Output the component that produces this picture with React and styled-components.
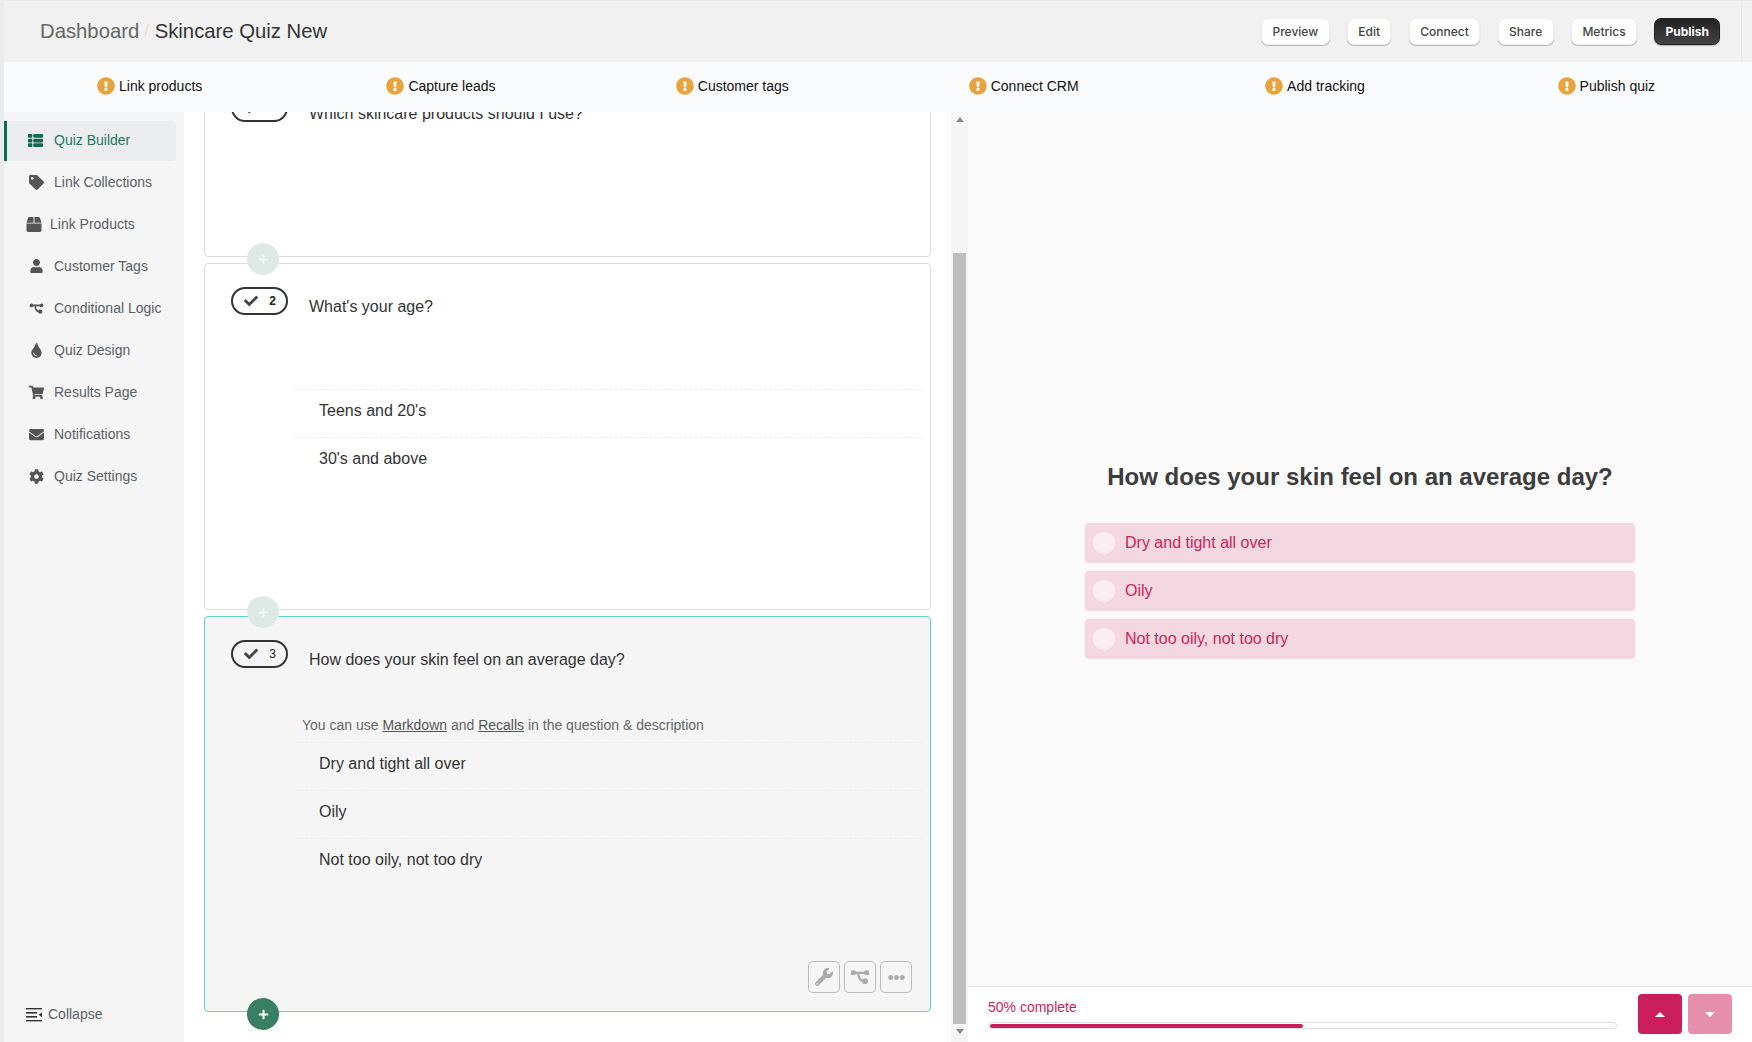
import React from "react";
import styled, { createGlobalStyle } from "styled-components";
import {
  FaCheck,
  FaCog,
  FaEllipsisH,
  FaEnvelope,
  FaExclamationCircle,
  FaPlus,
  FaShoppingCart,
  FaTag,
  FaThList,
  FaTint,
  FaUser,
  FaBox,
  FaWrench,
} from "react-icons/fa";

const GlobalStyle = createGlobalStyle`
  * { box-sizing: border-box; }
  html, body { margin: 0; height: 100%; overflow: hidden; }
  body {
    font-family: "Liberation Sans", Arial, sans-serif;
    color: #333;
  }
`;

const LogicIcon = ({ size = 16 }) => (
  <svg width={size} height={size} viewBox="0 0 24 24" fill="none" stroke="currentColor" strokeWidth="2.6">
    <path d="M4 7h16M10 7c0 7 2 10 7 10" />
    <circle cx="4" cy="7" r="3" fill="currentColor" stroke="none" />
    <circle cx="20" cy="7" r="3" fill="currentColor" stroke="none" />
    <circle cx="18" cy="17" r="3.4" fill="currentColor" stroke="none" />
  </svg>
);

const CollapseIcon = () => (
  <svg width="16" height="15" viewBox="0 0 16 15" fill="#333">
    <rect x="0" y="1" width="16" height="1.4" />
    <rect x="0" y="5" width="11" height="1.6" />
    <rect x="0" y="9" width="11" height="1.6" />
    <rect x="0" y="13" width="16" height="1.4" />
    <path d="M12.5 7.8L16 5.4v4.8z" />
  </svg>
);

const NAV = [
  { label: "Quiz Builder", icon: <FaThList size={15} />, active: true },
  { label: "Link Collections", icon: <FaTag size={15} /> },
  { label: "Link Products", icon: <FaBox size={15} />, tight: true },
  { label: "Customer Tags", icon: <FaUser size={14} /> },
  { label: "Conditional Logic", icon: <LogicIcon size={15} /> },
  { label: "Quiz Design", icon: <FaTint size={15} /> },
  { label: "Results Page", icon: <FaShoppingCart size={15} /> },
  { label: "Notifications", icon: <FaEnvelope size={15} /> },
  { label: "Quiz Settings", icon: <FaCog size={15} /> },
];

const STEPS = ["Link products", "Capture leads", "Customer tags", "Connect CRM", "Add tracking", "Publish quiz"];
const ACTIONS = ["Preview", "Edit", "Connect", "Share", "Metrics"];
const SKIN_OPTIONS = ["Dry and tight all over", "Oily", "Not too oily, not too dry"];

const Page = styled.div`
  display: flex;
  flex-direction: column;
  height: 100vh;
  padding-left: 4px;
  background: #ebebeb;
`;

const Header = styled.header`
  position: relative;
  display: flex;
  flex: 0 0 62px;
  align-items: center;
  justify-content: space-between;
  padding: 0 32px 1px 36px;
  background: #f1f1f1;
  border-top: 1px solid #e9e9e9;

  &::after {
    content: "";
    position: absolute;
    top: 0;
    right: 10px;
    bottom: 0;
    width: 1px;
    background: #e7e7e7;
  }
`;

const Crumbs = styled.div`
  display: flex;
  align-items: center;
  font-size: 20.3px;
  color: #666;
`;

const Slash = styled.span`
  margin: 0 6px 0 5px;
  color: #ddd;
  font-size: 16px;
`;

const Current = styled.span`
  color: #333;
`;

const Actions = styled.div`
  display: flex;
  gap: 17.4px;
`;

const ActionButton = styled.button`
  height: 27px;
  padding: 0 ${(p) => (p.$dark ? "10px" : "10.4px")};
  border: 1px solid ${(p) => (p.$dark ? "#222" : "#eee")};
  border-radius: 7px;
  background: ${(p) => (p.$dark ? "linear-gradient(#222, #444)" : "#fff")};
  box-shadow: 0 1px 1px rgba(0, 0, 0, 0.25);
  color: ${(p) => (p.$dark ? "#fff" : "#444")};
  font-family: Inter, sans-serif;
  font-size: 12px;
  font-weight: ${(p) => (p.$dark ? 700 : 500)};
`;

const Banner = styled.nav`
  display: grid;
  flex: 0 0 50px;
  grid-template-columns: repeat(6, 1fr);
  padding-bottom: 3px;
  background: #fafbfd;
`;

const Step = styled.div`
  display: flex;
  align-items: center;
  justify-content: center;
  gap: 4px;
  font-size: 14px;
  color: #111;

  svg {
    color: #e8a33d;
  }
`;

const Body = styled.div`
  display: flex;
  flex: 1;
  min-height: 0;
`;

const Sidebar = styled.aside`
  display: flex;
  flex: 0 0 180px;
  flex-direction: column;
  padding: 9px 8px 20px 0;
  background: #f5f5f5;
`;

const NavItem = styled.a`
  display: flex;
  align-items: center;
  gap: ${(p) => (p.$tight ? "8px" : "10px")};
  height: 40px;
  margin-bottom: 2px;
  padding: 0 0 2px ${(p) => (p.$tight ? "19px" : "22px")};
  border-left: 3px solid ${(p) => (p.$active ? "#0e6b4d" : "transparent")};
  border-radius: 0 4px 4px 0;
  background: ${(p) => (p.$active ? "#ebecee" : "transparent")};
  color: ${(p) => (p.$active ? "#1f7a5c" : "#5a5f66")};
  font-size: 14px;

  svg {
    flex: 0 0 auto;
    width: ${(p) => (p.$tight ? "16px" : "15px")};
    margin-left: ${(p) => (p.$active ? "-1px" : "0")};
    color: ${(p) => (p.$active ? "#0e6b4d" : "#555")};
  }
`;

const NavLabel = styled.span`
  margin-left: ${(p) => (p.$active ? "1px" : "0")};
`;

const Collapse = styled.a`
  display: flex;
  align-items: center;
  gap: 6px;
  margin-top: auto;
  padding-left: 22px;
  color: #5a5f66;
  font-size: 14px;
`;

const Main = styled.main`
  flex: 1;
  min-width: 0;
  padding: 0 20px;
  overflow: hidden;
  background: #fff;
`;

const CardList = styled.div`
  display: flex;
  flex-direction: column;
  gap: 6px;
  margin-top: -42px;
`;

const Card = styled.section`
  position: relative;
  display: flex;
  flex-direction: column;
  height: ${(p) => p.$height}px;
  border: 1px solid ${(p) => (p.$selected ? "#5ad8cf" : "#dcdcdc")};
  border-radius: 4px;
  background: ${(p) => (p.$selected ? "#f5f5f5" : "#fff")};
`;

const CardHead = styled.div`
  display: flex;
  align-items: flex-start;
  height: 100px;
  padding: 23px 0 0 26px;
`;

const Badge = styled.div`
  display: flex;
  align-items: center;
  justify-content: space-between;
  width: 57px;
  height: 28px;
  padding: 0 10px 0 11px;
  border: 2px solid #333;
  border-radius: 14px;
  font-size: 12px;
  font-weight: ${(p) => (p.$bold ? 700 : 400)};
  color: #222;

  svg {
    color: #444;
  }
`;

const Question = styled.h3`
  margin: 10px 0 0 21px;
  font-size: 16px;
  font-weight: 400;
  line-height: 20px;
  color: #333;
`;

const HelpSlot = styled.div`
  height: 25px;
  margin-left: 97px;
  font-size: 14px;
  line-height: 16px;
  color: #666;

  a {
    color: #555;
    text-decoration: underline;
  }
`;

const ChoiceList = styled.ul`
  margin: 0 8px 0 90px;
  padding: 0;
  list-style: none;
`;

const Choice = styled.li`
  height: 48px;
  padding: 10px 0 0 24px;
  border-top: 1px dashed #eee;
  font-size: 16px;
  line-height: 22px;
  color: #333;
`;

const Tools = styled.div`
  display: flex;
  justify-content: flex-end;
  gap: 4px;
  margin-top: auto;
  padding: 0 18px 18px 0;
`;

const ToolButton = styled.button`
  display: flex;
  align-items: center;
  justify-content: center;
  width: 32px;
  height: 32px;
  padding: 0;
  border: 1px solid #bbb;
  border-radius: 5px;
  background: transparent;
  color: #aaa;
`;

const AddButton = styled.button`
  position: absolute;
  z-index: 2;
  bottom: -19px;
  left: 42px;
  display: flex;
  align-items: center;
  justify-content: center;
  width: 32px;
  height: 32px;
  padding: 0;
  border: 0;
  border-radius: 50%;
  background: ${(p) => (p.$faded ? "#dde9e5" : "#3a7f63")};
  color: ${(p) => (p.$faded ? "#f0f6f4" : "#fff")};
`;

const ScrollBar = styled.div`
  display: flex;
  flex: 0 0 17px;
  flex-direction: column;
  align-items: center;
  background: #f5f5f5;
`;

const ScrollArrow = styled.span`
  width: 0;
  height: 0;
  flex: 0 0 5px;
  margin: ${(p) => (p.$up ? "5px 0 7px" : "5px 0 0")};
  border-right: 4px solid transparent;
  border-left: 4px solid transparent;
  border-top: ${(p) => (p.$up ? "0" : "5px solid #888")};
  border-bottom: ${(p) => (p.$up ? "5px solid #888" : "0")};
`;

const ScrollThumb = styled.div`
  width: 13px;
  flex: 0 0 771px;
  margin-top: 124px;
  background: #bdbdbd;
`;

const Preview = styled.aside`
  display: flex;
  flex: 0 0 784px;
  flex-direction: column;
  background: #fafafa;
`;

const Stage = styled.div`
  display: flex;
  flex: 1;
  flex-direction: column;
  align-items: center;
  padding-top: 351px;
`;

const Heading = styled.h2`
  margin: 0 0 32px;
  font-size: 24px;
  font-weight: 700;
  line-height: 28px;
  color: #3d3d3d;
`;

const OptionList = styled.div`
  display: flex;
  flex-direction: column;
  gap: 8px;
  width: 550px;
`;

const Option = styled.div`
  display: flex;
  align-items: center;
  gap: 10px;
  height: 40px;
  padding-left: 8px;
  border-radius: 4px;
  background: #f3d8e1;
  color: #cb1f5c;
  font-size: 16px;
`;

const Radio = styled.span`
  width: 22px;
  height: 22px;
  border-radius: 50%;
  background: #faeef2;
`;

const Footer = styled.footer`
  display: flex;
  flex: 0 0 56px;
  align-items: flex-start;
  justify-content: space-between;
  padding: 7px 20px 0;
  border-top: 1px solid #e6e6e6;
  background: #fff;
`;

const Progress = styled.div`
  flex: 0 0 629px;
  padding-top: 5px;
  color: #cb1f5c;
  font-size: 14px;
  line-height: 16px;
`;

const Track = styled.div`
  height: 7px;
  margin-top: 7px;
  padding: 0.5px 1px;
  border: 1px solid #ddd;
  border-radius: 4px;
`;

const Fill = styled.div`
  height: 100%;
  border-radius: 2px;
  background: #cb1f5c;
`;

const Pager = styled.div`
  display: flex;
  gap: 6px;
`;

const PagerButton = styled.button`
  display: flex;
  align-items: center;
  justify-content: center;
  width: 44px;
  height: 40px;
  padding: 0;
  border: 0;
  border-radius: 4px;
  background: ${(p) => (p.$light ? "#e58fac" : "#cb1f5c")};

  &::after {
    content: "";
    border-right: 5px solid transparent;
    border-left: 5px solid transparent;
    border-top: ${(p) => (p.$light ? "5px solid #fff" : "0")};
    border-bottom: ${(p) => (p.$light ? "0" : "5px solid #fff")};
  }
`;

const QuizCard = ({ number, title, height, choices = [], selected, help, faded, bold }) => (
  <Card $height={height} $selected={selected}>
    <CardHead>
      <Badge $bold={bold}>
        <FaCheck size={14} />
        {number}
      </Badge>
      <Question>{title}</Question>
    </CardHead>
    <HelpSlot>{help}</HelpSlot>
    <ChoiceList>
      {choices.map((choice) => (
        <Choice key={choice}>{choice}</Choice>
      ))}
    </ChoiceList>
    {selected && (
      <Tools>
        <ToolButton>
          <FaWrench size={18} />
        </ToolButton>
        <ToolButton>
          <LogicIcon size={20} />
        </ToolButton>
        <ToolButton>
          <FaEllipsisH size={17} />
        </ToolButton>
      </Tools>
    )}
    <AddButton $faded={faded}>
      <FaPlus size={11} />
    </AddButton>
  </Card>
);

export default function App() {
  return (
    <Page>
      <GlobalStyle />
      <Header>
        <Crumbs>
          Dashboard
          <Slash>/</Slash>
          <Current>Skincare Quiz New</Current>
        </Crumbs>
        <Actions>
          {ACTIONS.map((action) => (
            <ActionButton key={action}>{action}</ActionButton>
          ))}
          <ActionButton $dark>Publish</ActionButton>
        </Actions>
      </Header>
      <Banner>
        {STEPS.map((step) => (
          <Step key={step}>
            <FaExclamationCircle size={18} />
            {step}
          </Step>
        ))}
      </Banner>
      <Body>
        <Sidebar>
          {NAV.map((item) => (
            <NavItem key={item.label} $active={item.active} $tight={item.tight}>
              {item.icon}
              <NavLabel $active={item.active}>{item.label}</NavLabel>
            </NavItem>
          ))}
          <Collapse>
            <CollapseIcon />
            Collapse
          </Collapse>
        </Sidebar>
        <Main>
          <CardList>
            <QuizCard number="1" title="Which skincare products should I use?" height={187} faded />
            <QuizCard
              number="2"
              bold
              title="What's your age?"
              height={347}
              faded
              choices={["Teens and 20's", "30's and above"]}
            />
            <QuizCard
              number="3"
              title="How does your skin feel on an average day?"
              height={396}
              selected
              choices={SKIN_OPTIONS}
              help={
                <>
                  You can use <a>Markdown</a> and <a>Recalls</a> in the question &amp; description
                </>
              }
            />
          </CardList>
        </Main>
        <ScrollBar>
          <ScrollArrow $up />
          <ScrollThumb />
          <ScrollArrow />
        </ScrollBar>
        <Preview>
          <Stage>
            <Heading>How does your skin feel on an average day?</Heading>
            <OptionList>
              {SKIN_OPTIONS.map((option) => (
                <Option key={option}>
                  <Radio />
                  {option}
                </Option>
              ))}
            </OptionList>
          </Stage>
          <Footer>
            <Progress>
              50% complete
              <Track>
                <Fill style={{ width: "50%" }} />
              </Track>
            </Progress>
            <Pager>
              <PagerButton />
              <PagerButton $light />
            </Pager>
          </Footer>
        </Preview>
      </Body>
    </Page>
  );
}
